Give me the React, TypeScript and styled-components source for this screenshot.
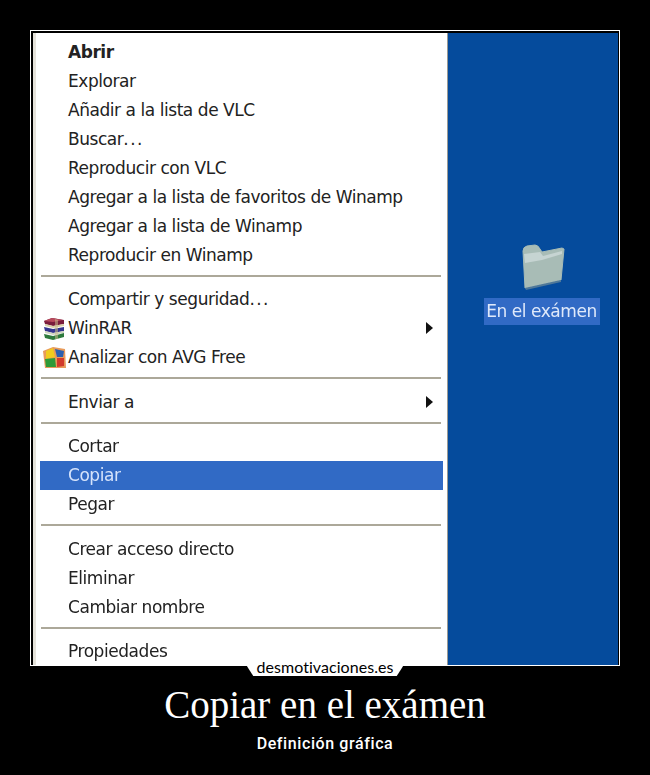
import React from "react";
import styled, { createGlobalStyle } from "styled-components";

const GlobalStyle = createGlobalStyle`
  html, body {
    margin: 0;
    padding: 0;
    background: #000;
  }
`;

const Page = styled.div`
  width: 650px;
  height: 775px;
  background: #000;
  padding-top: 30px;
  box-sizing: border-box;
  display: flex;
  flex-direction: column;
  align-items: center;
  overflow: hidden;
`;

const Frame = styled.div`
  position: relative;
  width: 590px;
  height: 636px;
  box-sizing: border-box;
  border: 1px solid #fff;
  padding: 2px 1px 0 2px;
  display: flex;
`;

const Menu = styled.div`
  width: 415px;
  box-sizing: border-box;
  background: #fff;
  border-left: 3px solid #e4e2da;
  border-right: 1px solid #9a9a94;
  padding: 4px 4px 0 4px;
  display: flex;
  flex-direction: column;
  filter: blur(0.45px);
`;

const Row = styled.div<{ $active?: boolean; $bold?: boolean }>`
  position: relative;
  flex: none;
  height: 29px;
  padding-left: 28px;
  display: flex;
  align-items: center;
  justify-content: space-between;
  font-family: "DejaVu Sans", sans-serif;
  font-size: 17px;
  letter-spacing: -0.45px;
  font-weight: ${(p) => (p.$bold ? 700 : 400)};
  color: ${(p) => (p.$active ? "#d5e3fb" : "#222")};
  background: ${(p) => (p.$active ? "#316ac5" : "transparent")};
`;

const Dots = styled.span`
  letter-spacing: 1.4px;
`;

const Separator = styled.div`
  flex: none;
  height: 2px;
  margin: 5.5px 2px 8px 1px;
  background: #aca899;
`;

const Arrow = styled.span`
  width: 0;
  height: 0;
  margin-right: 10px;
  border-left: 7px solid #111;
  border-top: 6px solid transparent;
  border-bottom: 6px solid transparent;
`;

const RowIcon = styled.svg`
  position: absolute;
  left: 3px;
  top: 3px;
  width: 23px;
  height: 23px;
`;

const Desktop = styled.div`
  flex: 1;
  background: #054b9c;
  display: flex;
  flex-direction: column;
  align-items: center;
  padding: 211px 0 0 18px;
  filter: blur(0.45px);
`;

const FolderIcon = styled.svg`
  width: 48px;
  height: 46px;
  margin-bottom: 8px;
`;

const FolderLabel = styled.div`
  background: #316ac5;
  color: #dfe9fa;
  font-family: "DejaVu Sans", sans-serif;
  font-size: 17px;
  letter-spacing: -0.45px;
  line-height: 27px;
  padding: 0 3px 0 2px;
`;

const Badge = styled.div`
  position: absolute;
  left: 216px;
  top: 630px;
  width: 156px;
  height: 15px;
  box-sizing: border-box;
  padding-bottom: 3px;
  background: #fff;
  clip-path: polygon(3% 0, 97% 0, 100% 35%, 96% 100%, 4% 100%, 0 35%);
  display: flex;
  align-items: center;
  justify-content: center;
  color: #000;
  font-family: "Lato", sans-serif;
  font-size: 16px;
  letter-spacing: 0.05px;
  line-height: 12px;
`;

const Title = styled.h1`
  margin: 16px 0 0;
  color: #fff;
  font-family: "Liberation Serif", serif;
  font-size: 39px;
  font-weight: 400;
  line-height: 46px;
`;

const Subtitle = styled.p`
  margin: 7px 0 0;
  color: #fff;
  font-family: "Roboto", sans-serif;
  font-size: 16px;
  font-weight: 500;
  letter-spacing: 0.6px;
  line-height: 18px;
`;

const WinRarIcon = () => (
  <RowIcon viewBox="0 0 23 23">
    <path d="M1 4 L9 1 L21 3 L21 7 L10 9 L2 7 Z" fill="#7a1c3c" />
    <path d="M1 4 L9 1 L20 3 L10 5 Z" fill="#b8495c" />
    <path d="M2 7 L10 9 L21 7 L21 9 L10 11 L2 9 Z" fill="#d9d0a8" />
    <path d="M1 10 L10 12 L21 10 L21 14 L10 16 L2 14 Z" fill="#34358f" />
    <path d="M2 14 L10 16 L21 14 L21 16 L10 18 L2 16 Z" fill="#cfd6c0" />
    <path d="M1 17 L10 19 L21 16 L21 20 L10 23 L2 21 Z" fill="#2c7a3c" />
    <path d="M12 2 L15 3 L15 22 L12 22 Z" fill="#c8b98a" opacity="0.55" />
  </RowIcon>
);

const AvgIcon = () => (
  <RowIcon viewBox="0 0 23 23">
    <path d="M0 5 L10 1 L22 3 L23 22 L2 22 Z" fill="#e89a5a" />
    <path d="M3 5 L10 2 L12 11 L3 13 Z" fill="#f0cc1e" />
    <path d="M12 3 L21 5 L20 11 L14 11 Z" fill="#2a5fb0" />
    <path d="M2 13 L12 12 L13 21 L3 21 Z" fill="#2f9a38" />
    <path d="M14 12 L21 12 L21 20 L14 21 Z" fill="#d23a2c" />
  </RowIcon>
);

const Folder = () => (
  <FolderIcon viewBox="0 0 48 46">
    <path
      d="M5 7 Q5 3 9 2 L17 1 Q20 1 22 5 L24 8 L44 4 L46 5 L43 36 L7 44 Z"
      fill="#a8bcb6"
      stroke="#a8bcb6"
      strokeLinejoin="round"
    />
    <path d="M6 10 L22 8 L25 12 L44 7 L44 10 L24 16 L7 19 Z" fill="#c6d4d2" />
    <path d="M7 44 L43 36 L43 38 L8 46 Z" fill="#4f7899" />
  </FolderIcon>
);

const App: React.FC = () => {
  return (
    <Page>
      <GlobalStyle />
      <Frame>
        <Menu>
          <Row $bold>Abrir</Row>
          <Row>Explorar</Row>
          <Row>Añadir a la lista de VLC</Row>
          <Row>
            <span>
              Buscar<Dots>...</Dots>
            </span>
          </Row>
          <Row>Reproducir con VLC</Row>
          <Row>Agregar a la lista de favoritos de Winamp</Row>
          <Row>Agregar a la lista de Winamp</Row>
          <Row>Reproducir en Winamp</Row>
          <Separator />
          <Row>
            <span>
              Compartir y seguridad<Dots>...</Dots>
            </span>
          </Row>
          <Row>
            <WinRarIcon />
            WinRAR
            <Arrow />
          </Row>
          <Row>
            <AvgIcon />
            Analizar con AVG Free
          </Row>
          <Separator />
          <Row>
            Enviar a
            <Arrow />
          </Row>
          <Separator />
          <Row>Cortar</Row>
          <Row $active>Copiar</Row>
          <Row>Pegar</Row>
          <Separator />
          <Row>Crear acceso directo</Row>
          <Row>Eliminar</Row>
          <Row>Cambiar nombre</Row>
          <Separator />
          <Row>Propiedades</Row>
        </Menu>
        <Desktop>
          <Folder />
          <FolderLabel>En el exámen</FolderLabel>
        </Desktop>
        <Badge>desmotivaciones.es</Badge>
      </Frame>
      <Title>Copiar en el exámen</Title>
      <Subtitle>Definición gráfica</Subtitle>
    </Page>
  );
};

export default App;
